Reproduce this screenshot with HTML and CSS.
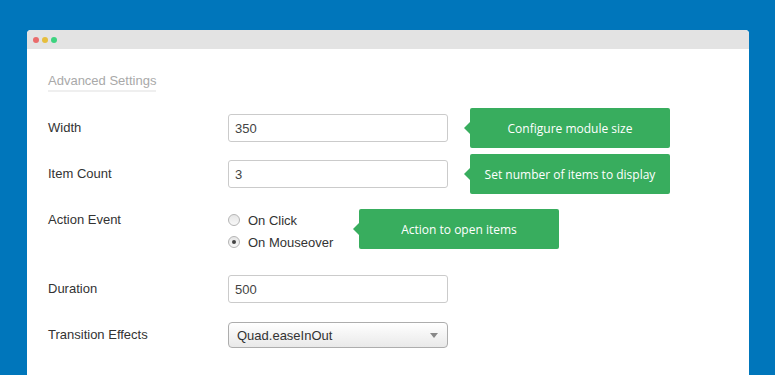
FILE: index.html
```html
<!doctype html>
<html lang="en">
<head>
  <meta charset="utf-8">
  <title>Advanced Settings</title>
  <meta name="viewport" content="width=device-width, initial-scale=1">
  <link rel="stylesheet" href="styles.css">
</head>
<body>
  <div class="window">
    <div class="window__bar">
      <span class="dot dot--red"></span>
      <span class="dot dot--yellow"></span>
      <span class="dot dot--green"></span>
    </div>
    <div class="window__body">
      <div class="heading">Advanced Settings</div>

      <div class="row">
        <label class="row__label">Width</label>
        <input class="field" type="text" value="350">
        <div class="tip">Configure module size</div>
      </div>

      <div class="row">
        <label class="row__label">Item Count</label>
        <input class="field" type="text" value="3">
        <div class="tip">Set number of items to display</div>
      </div>

      <div class="row row--top">
        <label class="row__label">Action Event</label>
        <div class="radios">
          <div class="radio"><span class="radio__mark"></span>On Click</div>
          <div class="radio"><span class="radio__mark radio__mark--on"></span>On Mouseover</div>
        </div>
        <div class="tip tip--raised">Action to open items</div>
      </div>

      <div class="row">
        <label class="row__label">Duration</label>
        <input class="field" type="text" value="500">
      </div>

      <div class="row">
        <label class="row__label">Transition Effects</label>
        <div class="select">
          <select>
            <option>Quad.easeInOut</option>
          </select>
        </div>
      </div>
    </div>
  </div>
</body>
</html>
```

FILE: styles.css
```css
html {
  background-color: #0076bb;
}

body {
  margin: 0;
  padding: 30px 0 0 27px;
  font-family: "Liberation Sans", Arial, sans-serif;
  font-size: 13px;
  color: #333;
  overflow: hidden;
}

.window {
  width: 722px;
  height: 360px;
  background: #fff;
  border-radius: 4px 4px 0 0;
  overflow: hidden;
}

.window__bar {
  height: 19px;
  background: #e3e3e3;
  display: flex;
  align-items: center;
  gap: 3px;
  padding-left: 6px;
}

.dot {
  width: 6px;
  height: 6px;
  border-radius: 50%;
}

.dot--red { background: #ea6b6b; }
.dot--yellow { background: #e6be3d; }
.dot--green { background: #3dd37f; }

.window__body {
  padding: 24px 0 0 21px;
}

.heading {
  display: inline-block;
  color: #a9a9a9;
  line-height: 16px;
  padding-bottom: 1px;
  border-bottom: 2px solid #efefef;
  margin-bottom: 13px;
}

.row {
  display: flex;
  align-items: center;
  height: 46px;
}

.row--top {
  align-items: flex-start;
  height: 55px;
  padding-top: 14px;
}

.row__label {
  width: 180px;
  line-height: 18px;
}

.field {
  box-sizing: border-box;
  width: 220px;
  height: 28px;
  margin: 0;
  padding: 0 6px;
  border: 1px solid #cbcbcb;
  border-radius: 3px;
  font-family: inherit;
  font-size: 13px;
  color: #444;
  background: #fff;
}

.tip {
  position: relative;
  width: 200px;
  height: 40px;
  margin-left: 22px;
  background: #38ad5e;
  border-radius: 2px;
  color: #fff;
  font-family: "Open Sans", sans-serif;
  font-size: 12px;
  display: flex;
  align-items: center;
  justify-content: center;
}

.tip::before {
  content: "";
  position: absolute;
  left: -6px;
  top: 50%;
  margin-top: -6px;
  border-top: 6px solid transparent;
  border-bottom: 6px solid transparent;
  border-right: 6px solid #38ad5e;
}

.tip--raised {
  margin-top: -2px;
}

.radios {
  width: 109px;
  margin-top: -2px;
}

.radio {
  display: flex;
  align-items: center;
  gap: 8px;
  height: 22px;
}

.radio__mark {
  box-sizing: border-box;
  width: 12px;
  height: 12px;
  border: 1px solid #b5b5b5;
  border-radius: 50%;
  background: linear-gradient(#e6e6e6, #f8f8f8);
  display: flex;
  align-items: center;
  justify-content: center;
}

.radio__mark--on::after {
  content: "";
  width: 4px;
  height: 4px;
  border-radius: 50%;
  background: #444;
}

.select {
  position: relative;
  width: 220px;
}

.select select {
  appearance: none;
  -webkit-appearance: none;
  box-sizing: border-box;
  width: 100%;
  height: 26px;
  margin: 0;
  padding: 0 8px;
  border: 1px solid #adadad;
  border-radius: 4px;
  background: linear-gradient(#ffffff, #e9e9e9);
  font-family: inherit;
  font-size: 13px;
  color: #333;
}

.select::after {
  content: "";
  position: absolute;
  right: 10px;
  top: 11px;
  border-left: 4px solid transparent;
  border-right: 4px solid transparent;
  border-top: 5px solid #888;
  pointer-events: none;
}
```
